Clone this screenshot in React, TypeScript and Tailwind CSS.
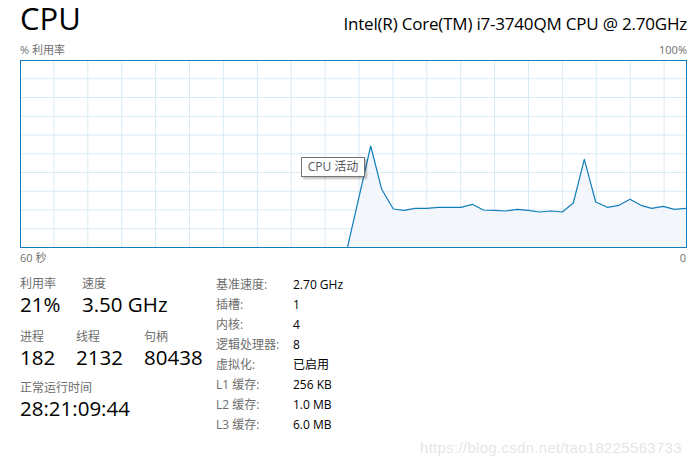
const FONT = "font-['Open_Sans','Noto_Sans_CJK_SC',sans-serif]";

// 折线点（页面坐标），图表内边框左上角为 (21, 61)
const points: [number, number][] = [
  [347.3, 248], [370.7, 146], [381.7, 189.3], [393.3, 209], [404, 210.3], [415, 208.3],
  [426.7, 208.3], [438.3, 207.3], [450, 207.3], [461, 207.3], [472.3, 204.3], [483.3, 210],
  [494.3, 210.3], [505.7, 211], [517.3, 209.3], [528.3, 210.3], [539.3, 212], [550.7, 211],
  [562.3, 212], [573.3, 203], [584.3, 159.3], [595.7, 202], [607.3, 207.3], [619, 205.3],
  [630, 199.3], [641, 205.3], [651.7, 208.3], [663.3, 206.3], [674.3, 209.3], [686, 208.3],
];

const specs = [
  ["基准速度:", "2.70 GHz"],
  ["插槽:", "1"],
  ["内核:", "4"],
  ["逻辑处理器:", "8"],
  ["虚拟化:", "已启用"],
  ["L1 缓存:", "256 KB"],
  ["L2 缓存:", "1.0 MB"],
  ["L3 缓存:", "6.0 MB"],
];

const Chart = () => {
  const pts = points.map(([x, y]) => [x - 21, y - 61]);
  const line = pts.map((p) => p.join(",")).join(" ");
  const fill = `${line} 665,187 ${pts[0][0]},187`;
  const vLines = Array.from({ length: 19 }, (_, i) => -1 + 33.9 * (i + 1));
  const hLines = Array.from({ length: 9 }, (_, i) => -1 + 18.75 * (i + 1));

  return (
    <div className="relative h-[188px] border border-[#117dbb]">
      <svg className="block w-full h-full" viewBox="0 0 665 186" preserveAspectRatio="none">
        {vLines.map((x) => (
          <line key={x} x1={x} y1={0} x2={x} y2={186} stroke="#d9eaf4" strokeWidth={1} />
        ))}
        {hLines.map((y) => (
          <line key={y} x1={0} y1={y} x2={665} y2={y} stroke="#d9eaf4" strokeWidth={1} />
        ))}
        <polygon points={fill} fill="#f1f6fa" fillOpacity={0.85} />
        <polyline points={line} fill="none" stroke="#117dbb" strokeWidth={1.2} strokeLinejoin="round" />
      </svg>
      <div className="absolute left-[280px] top-[96px] w-[64px] h-[20px] flex items-center justify-center bg-white border border-[#767676] text-[12px] text-[#575757] shadow-[2px_2px_2px_rgba(0,0,0,0.25)]">
        CPU 活动
      </div>
    </div>
  );
};

const Stat = ({ label, value, mt }: { label: string; value: string; mt: string }) => (
  <div className={`flex flex-col ${mt}`}>
    <span className="text-[12px] leading-[16px] text-[#6e6e6e]">{label}</span>
    <span className="text-[20.5px] leading-[22px] mt-[1px] text-black">{value}</span>
  </div>
);

export default function App() {
  return (
    <div className={`relative w-[694px] h-[465px] overflow-hidden bg-white pl-[20px] pr-[7px] ${FONT}`}>
      <div className="flex h-[36px] items-baseline justify-between pt-[1px]">
        <span className="text-[31px] leading-[35px] text-black">CPU</span>
        <span className="text-[17px] tracking-[-0.2px] text-black">Intel(R) Core(TM) i7-3740QM CPU @ 2.70GHz</span>
      </div>
      <div className="flex h-[24px] pt-[4px] items-center justify-between text-[11px] text-[#707070]">
        <span>% 利用率</span>
        <span>100%</span>
      </div>
      <Chart />
      <div className="flex h-[20px] items-center justify-between text-[11px] text-[#707070]">
        <span>60 秒</span>
        <span className="pr-[1px]">0</span>
      </div>

      <div className="flex">
        <div className="w-[196px] pt-[8px]">
          <div className="flex">
            <div className="w-[62px]">
              <Stat label="利用率" value="21%" mt="" />
            </div>
            <Stat label="速度" value="3.50 GHz" mt="" />
          </div>
          <div className="flex mt-[14px]">
            <div className="w-[56px]">
              <Stat label="进程" value="182" mt="" />
            </div>
            <div className="w-[68px]">
              <Stat label="线程" value="2132" mt="" />
            </div>
            <Stat label="句柄" value="80438" mt="" />
          </div>
          <Stat label="正常运行时间" value="28:21:09:44" mt="mt-[12px]" />
        </div>

        <div className="pt-[7px] grid grid-cols-[77px_auto] auto-rows-[20px] items-center text-[12px]">
          {specs.map(([k, v]) => (
            <div key={k} className="contents">
              <span className="text-[#6e6e6e]">{k}</span>
              <span className="text-black">{v}</span>
            </div>
          ))}
        </div>
      </div>

      <div className="absolute left-[420px] top-[437px] font-['Liberation_Sans',sans-serif] text-[15px] tracking-[0.3px] text-[#e6e6e6]">
        https://blog.csdn.net/tao18225563733
      </div>
    </div>
  );
}
